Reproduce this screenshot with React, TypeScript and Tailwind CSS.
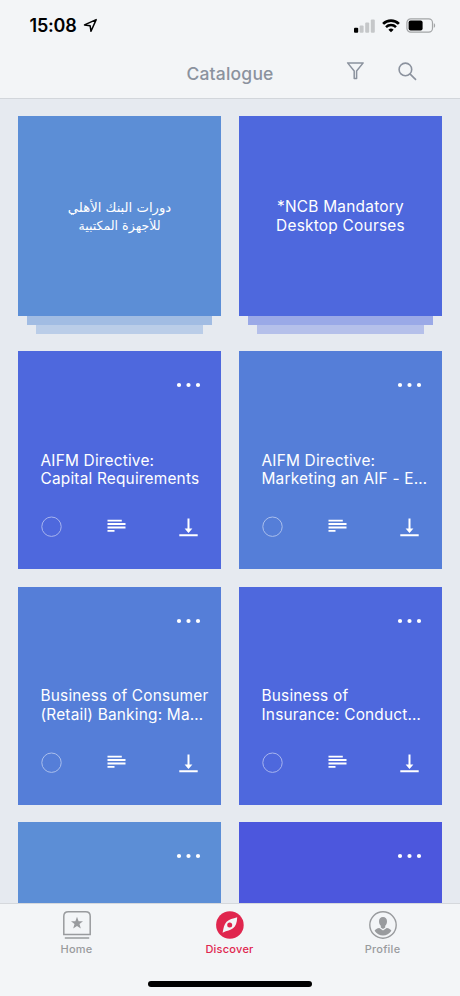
import React from 'react';

type Line = { text: string; className?: string };

const collections: { bg: string; rtl?: boolean; lines: Line[] }[] = [
  {
    bg: 'bg-[#5c8ed6]',
    rtl: true,
    lines: [
      { text: 'دورات البنك الأهلي', className: 'text-[13.2px]' },
      { text: 'للأجهزة المكتبية', className: 'text-[12.6px]' },
    ],
  },
  {
    bg: 'bg-[#4e68dd]',
    lines: [{ text: '*NCB Mandatory' }, { text: 'Desktop Courses' }],
  },
];

const courses = [
  { bg: 'bg-[#4e68dd]', lines: ['AIFM Directive:', 'Capital Requirements'] },
  { bg: 'bg-[#557ed8]', lines: ['AIFM Directive:', 'Marketing an AIF - E…'] },
  { bg: 'bg-[#557ed8]', lines: ['Business of Consumer', '(Retail) Banking: Ma…'] },
  { bg: 'bg-[#4e68dd]', lines: ['Business of', 'Insurance: Conduct…'] },
  { bg: 'bg-[#5c8ed6]', lines: [] },
  { bg: 'bg-[#4c57dd]', lines: [] },
];

function StatusBar() {
  return (
    <div className="flex h-[50px] items-center justify-between pt-px pr-6 pl-[29.5px] text-black">
      <div className="flex items-center gap-[6px]">
        <span className="text-[18px] leading-none font-semibold tracking-[-0.2px]">15:08</span>
        <svg width="15" height="15" viewBox="0 0 15 15" fill="none" stroke="currentColor" strokeWidth="1.5" strokeLinejoin="round">
          <path d="M13.2 1.6 1.5 6.9l5.6.8.9 5.6z" />
        </svg>
      </div>
      <div className="flex items-center">
        <svg width="21" height="14" viewBox="0 0 21 14">
          <rect x="0" y="8.8" width="4.2" height="5" rx="1" fill="#000" />
          <rect x="5.6" y="6.5" width="4" height="7.3" rx="1" fill="#c5c7c9" />
          <rect x="11.2" y="3.5" width="4" height="10.3" rx="1" fill="#c5c7c9" />
          <rect x="16.8" y="0.5" width="4" height="13.3" rx="1" fill="#c5c7c9" />
        </svg>
        <svg className="ml-[7px]" width="18" height="14" viewBox="0 0 18 14" fill="none" stroke="#000">
          <path d="M1.1 4.9a11.2 11.2 0 0 1 15.8 0" strokeWidth="2.7" />
          <path d="M4 8.1a7.1 7.1 0 0 1 10 0" strokeWidth="2.5" />
          <path d="M9 13.3 6.4 10.7a3.7 3.7 0 0 1 5.2 0z" fill="#000" stroke="none" />
        </svg>
        <svg className="ml-[6px]" width="30" height="15" viewBox="0 0 30 15">
          <rect x="0.9" y="0.9" width="25.6" height="13.2" rx="3.8" fill="none" stroke="#a3a5a7" strokeWidth="1.2" />
          <rect x="2.6" y="2.6" width="14" height="9.8" rx="2" fill="#000" />
          <path d="M27.8 5.2c1.8.6 1.8 4 0 4.6z" fill="#a3a5a7" />
        </svg>
      </div>
    </div>
  );
}

function Header() {
  return (
    <header className="h-[99px] shrink-0 border-b border-[#d2d6db] bg-[#f3f5f7]">
      <StatusBar />
      <div className="relative flex h-12 items-center justify-center text-[#8b929e]">
        <h1 className="text-[17.5px] leading-none font-medium tracking-[0.2px]">Catalogue</h1>
        <div className="absolute top-[11px] right-[43px] flex gap-[32px]">
          <svg width="20" height="20" viewBox="0 0 20 20" fill="none" stroke="currentColor" strokeWidth="1.5" strokeLinejoin="round">
            <path d="M2.6 1.9h15.6L11.6 10v7.6H9.2V10z" />
          </svg>
          <svg width="20" height="20" viewBox="0 0 20 20" fill="none" stroke="currentColor" strokeWidth="1.6">
            <circle cx="8.4" cy="8.4" r="6.3" />
            <path d="m12.9 12.9 6.100 6" />
          </svg>
        </div>
      </div>
    </header>
  );
}

function CollectionCard({ bg, rtl, lines }: (typeof collections)[number]) {
  return (
    <div className="flex h-[217.5px] flex-col items-center">
      <div className={`${bg} flex h-[200px] w-full flex-col items-center justify-center text-white`}>
        {lines.map(line => (
          <p
            key={line.text}
            dir={rtl ? 'rtl' : 'ltr'}
            className={
              rtl
                ? `h-[18.5px] pt-px font-['DejaVu_Sans',sans-serif] leading-[18.5px] whitespace-nowrap ${line.className}`
                : 'h-[18.5px] pt-[0.5px] text-[15.4px] leading-[18.5px] tracking-[0.25px] whitespace-nowrap'
            }
          >
            {line.text}
          </p>
        ))}
      </div>
      {/* Stacked sheets under the card */}
      <div className={`${bg} h-[9px] w-[185px] opacity-50`} />
      <div className={`${bg} h-[8.5px] w-[167px] opacity-32`} />
    </div>
  );
}

function CourseCard({ bg, lines }: (typeof courses)[number]) {
  return (
    <div className={`${bg} h-[218px] pt-[31px] pr-5 pl-[22.5px] text-white`}>
      <svg className="ml-auto" width="25" height="6" viewBox="0 0 25 6" fill="currentColor">
        <circle cx="3" cy="3" r="2.1" />
        <circle cx="12.5" cy="3" r="2.1" />
        <circle cx="22" cy="3" r="2.1" />
      </svg>
      <div className="mt-[63.5px] h-[37px] text-[15.4px] leading-[18.5px] tracking-[0.2px] whitespace-nowrap">
        {lines.map(line => (
          <p key={line}>{line}</p>
        ))}
      </div>
      <div className="mt-[27.5px] flex items-center justify-between pr-[3px]">
        <svg width="21" height="21" viewBox="0 0 21 21" fill="none" stroke="currentColor" className="opacity-50">
          <circle cx="10.5" cy="10.7" r="9.7" />
        </svg>
        <svg className="mr-2" width="19" height="21" viewBox="0 0 19 21" fill="currentColor">
          <path d="M.5 3.7h14.3v1.9H.5zM.5 7.1h18V9H.5zM.5 10.5h18v1.9H.5zM.5 13.9h7v1.9h-7z" />
        </svg>
        <svg width="19" height="21" viewBox="0 0 19 21" fill="currentColor">
          <path d="M8.5 2.5h2v10h2.9L9.5 17l-3.9-4.500h2.900zM.3 18.200h18.400v2H.3z" />
        </svg>
      </div>
    </div>
  );
}

function TabBar() {
  return (
    <nav className="h-[93px] shrink-0 border-t border-[#d5d8dc] bg-[#f3f5f7]">
      <div className="grid h-[79px] grid-cols-3 pr-px text-[11px] leading-[14px] font-medium tracking-[0.25px] text-[#999b9e]">
        <div className="flex flex-col items-center gap-[3px] pt-[7px]">
          <svg width="28" height="28" viewBox="0 0 28 28" fill="none" stroke="currentColor" strokeWidth="1.5">
            <path d="M.8 23.4V5.3Q.8.8 5.3.8h17.4q4.5 0 4.5 4.5v18.1z" />
            <path d="M1.8 27h24.4" />
            <path
              d="m14 5.8 1.6 4.4h4.4l-3.500 2.800 1.300 4.500-3.800-2.600-3.800 2.600 1.300-4.500-3.500-2.800h4.400z"
              fill="currentColor"
              stroke="none"
            />
          </svg>
          <span>Home</span>
        </div>
        <div className="flex flex-col items-center gap-[3px] pt-[7px] text-[#e0264e]">
          <svg width="28" height="28" viewBox="0 0 28 28">
            <circle cx="13.9" cy="14" r="13.8" fill="currentColor" />
            <path d="M21.2 6.2C21 11.500 19.800 15.200 17 17.300c-2.500 1.900-5.800 2.300-10.400 4.400C7.600 17.200 8 13.500 10.600 10.700c2.500-2.700 6.200-2.900 10.600-4.500z" fill="#f3f5f7" />
            <circle cx="13.7" cy="14.1" r="2.5" fill="currentColor" />
          </svg>
          <span className="tracking-[0.25px]">Discover</span>
        </div>
        <div className="flex flex-col items-center gap-[3px] pt-[7px]">
          <svg width="28" height="28" viewBox="0 0 28 28" fill="currentColor">
            <circle cx="14" cy="14" r="13.2" fill="none" stroke="currentColor" strokeWidth="1.4" />
            <path d="M14 6c2.500 0 4 1.700 4 4.300 0 2-.7 3.500-1.800 4.500v1.600L14 18l-2.200-1.600v-1.600c-1.100-1-1.800-2.500-1.800-4.500C10 7.700 11.500 6 14 6z" />
            <path d="m10.300 17.100 3.700 2.500 3.700-2.500c2.300.4 3.900 1.100 4.700 2.700-2 3.200-5 4.700-8.400 4.700s-6.400-1.500-8.400-4.700c.8-1.600 2.400-2.300 4.700-2.700z" />
          </svg>
          <span>Profile</span>
        </div>
      </div>
      {/* Home indicator */}
      <div className="mx-auto mt-[-2px] h-[5.5px] w-[164px] rounded-full bg-black" />
    </nav>
  );
}

export default function App() {
  return (
    <div className="flex h-screen w-full flex-col overflow-hidden bg-[#e6eaf0] font-['Inter','Liberation_Sans',sans-serif]">
      <Header />
      <main className="min-h-0 flex-1 overflow-hidden px-[18px] pt-[17px]">
        <div className="grid grid-cols-[203px_203px] gap-x-[18px] gap-y-[17.6px]">
          {collections.map((item, i) => (
            <CollectionCard key={i} {...item} />
          ))}
          {courses.map((course, i) => (
            <CourseCard key={i} {...course} />
          ))}
        </div>
      </main>
      <TabBar />
    </div>
  );
}
